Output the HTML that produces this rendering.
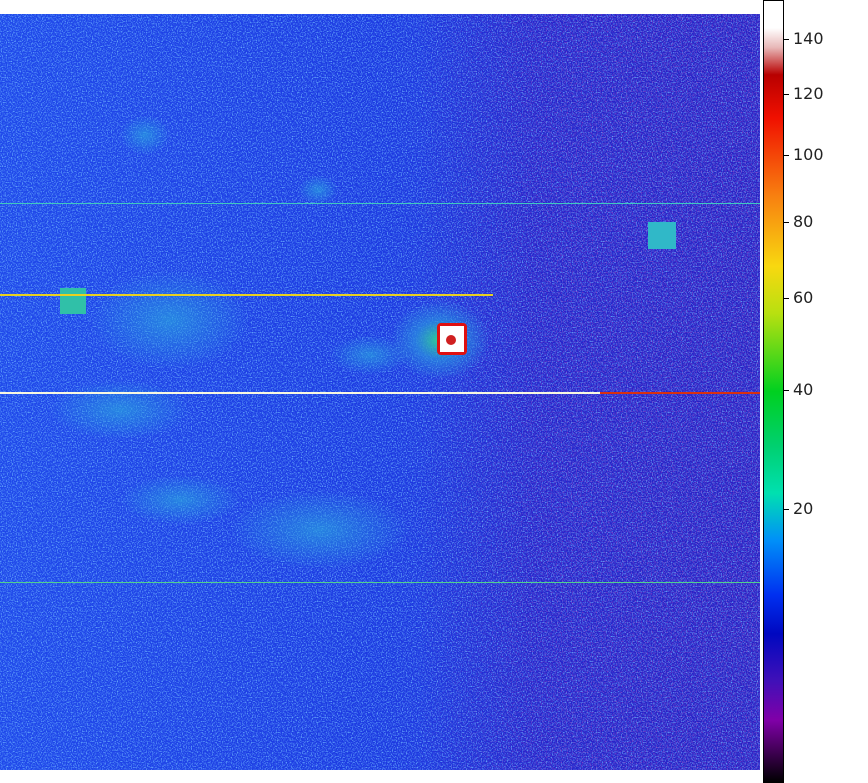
<!DOCTYPE html>
<html><head><style>
body{margin:0;width:868px;height:783px;background:#fff;position:relative;overflow:hidden;font-family:"DejaVu Sans","Liberation Sans",sans-serif}
.l{position:absolute;left:793px;font-size:16px;color:#222;line-height:16px}
.t{position:absolute;left:784px;width:5px;height:1px;background:#000}
</style></head><body>
<svg width="868" height="783" style="position:absolute;left:0;top:0">
<defs>
<linearGradient id="bg" x1="0" x2="1" y1="0" y2="0">
<stop offset="0" stop-color="#1f48ea"/><stop offset="0.55" stop-color="#1c38e0"/><stop offset="0.7" stop-color="#2424cc"/><stop offset="1" stop-color="#2820c4"/></linearGradient>
<linearGradient id="mg" x1="0" x2="1" y1="0" y2="0"><stop offset="0" stop-color="#000"/><stop offset="0.5" stop-color="#000"/><stop offset="0.75" stop-color="#fff"/><stop offset="1" stop-color="#fff"/></linearGradient>
<mask id="m"><rect x="0" y="14" width="760" height="756" fill="url(#mg)"/></mask>
<radialGradient id="g1"><stop offset="0" stop-color="#2aa0e0" stop-opacity=".7"/><stop offset="1" stop-color="#2aa0e0" stop-opacity="0"/></radialGradient>
<radialGradient id="g2"><stop offset="0" stop-color="#30d090"/><stop offset="0.5" stop-color="#2a90e0" stop-opacity=".7"/><stop offset="1" stop-color="#2a90e0" stop-opacity="0"/></radialGradient>
<linearGradient id="cb" x1="0" x2="0" y1="0" y2="1">
<stop offset="0" stop-color="#fff"/><stop offset="0.035" stop-color="#fff"/><stop offset="0.06" stop-color="#e8b8b8"/><stop offset="0.095" stop-color="#b80000"/><stop offset="0.15" stop-color="#f01000"/><stop offset="0.25" stop-color="#f88010"/><stop offset="0.34" stop-color="#f8d810"/><stop offset="0.40" stop-color="#b8e010"/><stop offset="0.50" stop-color="#00d020"/><stop offset="0.57" stop-color="#00d070"/><stop offset="0.63" stop-color="#00e0b0"/><stop offset="0.69" stop-color="#0090f8"/><stop offset="0.76" stop-color="#0030f0"/><stop offset="0.81" stop-color="#0008c0"/><stop offset="0.87" stop-color="#4010b8"/><stop offset="0.92" stop-color="#8000a8"/><stop offset="1" stop-color="#000"/></linearGradient>
<filter id="n" x="0" y="0" width="1" height="1"><feTurbulence type="fractalNoise" baseFrequency="0.8" numOctaves="1" seed="3"/><feColorMatrix values="0 0 0 0 0.15  0 0 0 0 0.45  0 0 0 0 1  0 0 0 3 -1.4"/></filter>
<filter id="n2" x="0" y="0" width="1" height="1"><feTurbulence type="fractalNoise" baseFrequency="0.8" numOctaves="1" seed="9"/><feColorMatrix values="0 0 0 0 0.25  0 0 0 0 0.05  0 0 0 0 0.55  0 0 0 3 -1.5"/></filter>
<clipPath id="c"><rect x="0" y="14" width="760" height="756"/></clipPath>
</defs>
<g clip-path="url(#c)">
<rect x="0" y="14" width="760" height="756" fill="url(#bg)"/>
<rect x="0" y="14" width="760" height="756" filter="url(#n)"/>
<g mask="url(#m)"><rect x="0" y="14" width="760" height="756" filter="url(#n2)"/></g>
<ellipse cx="170" cy="320" rx="80" ry="50" fill="url(#g1)"/>
<ellipse cx="120" cy="410" rx="70" ry="30" fill="url(#g1)"/>
<ellipse cx="320" cy="530" rx="90" ry="40" fill="url(#g1)"/>
<ellipse cx="180" cy="500" rx="60" ry="25" fill="url(#g1)"/>
<ellipse cx="370" cy="355" rx="40" ry="20" fill="url(#g1)"/>
<ellipse cx="440" cy="340" rx="50" ry="40" fill="url(#g2)"/>
<ellipse cx="145" cy="135" rx="25" ry="20" fill="url(#g1)"/>
<ellipse cx="318" cy="190" rx="20" ry="15" fill="url(#g1)"/>
<rect x="648" y="222" width="28" height="27" fill="#30b8c8"/>
<rect x="60" y="288" width="26" height="26" fill="#30c0a8"/>
<rect x="0" y="203" width="760" height="1" fill="#40c8c0"/>
<rect x="0" y="294" width="493" height="2" fill="#e8d020"/>
<rect x="0" y="392" width="600" height="2" fill="#f8f8e0"/>
<rect x="600" y="392" width="160" height="2" fill="#d83010"/>
<rect x="0" y="582" width="760" height="1" fill="#50d090"/>
<rect x="437" y="323" width="30" height="32" rx="4" fill="#e01010"/>
<rect x="440" y="326" width="24" height="26" fill="#fff"/>
<circle cx="451" cy="340" r="5" fill="#d02020"/>
</g>
<rect x="763.5" y="0.5" width="20" height="782" fill="url(#cb)" stroke="#000"/>
</svg>
<div class="t" style="top:39px"></div><div class="l" style="top:31px">140</div>
<div class="t" style="top:94px"></div><div class="l" style="top:86px">120</div>
<div class="t" style="top:155px"></div><div class="l" style="top:147px">100</div>
<div class="t" style="top:222px"></div><div class="l" style="top:214px">80</div>
<div class="t" style="top:298px"></div><div class="l" style="top:290px">60</div>
<div class="t" style="top:390px"></div><div class="l" style="top:382px">40</div>
<div class="t" style="top:509px"></div><div class="l" style="top:501px">20</div>
</body></html>
